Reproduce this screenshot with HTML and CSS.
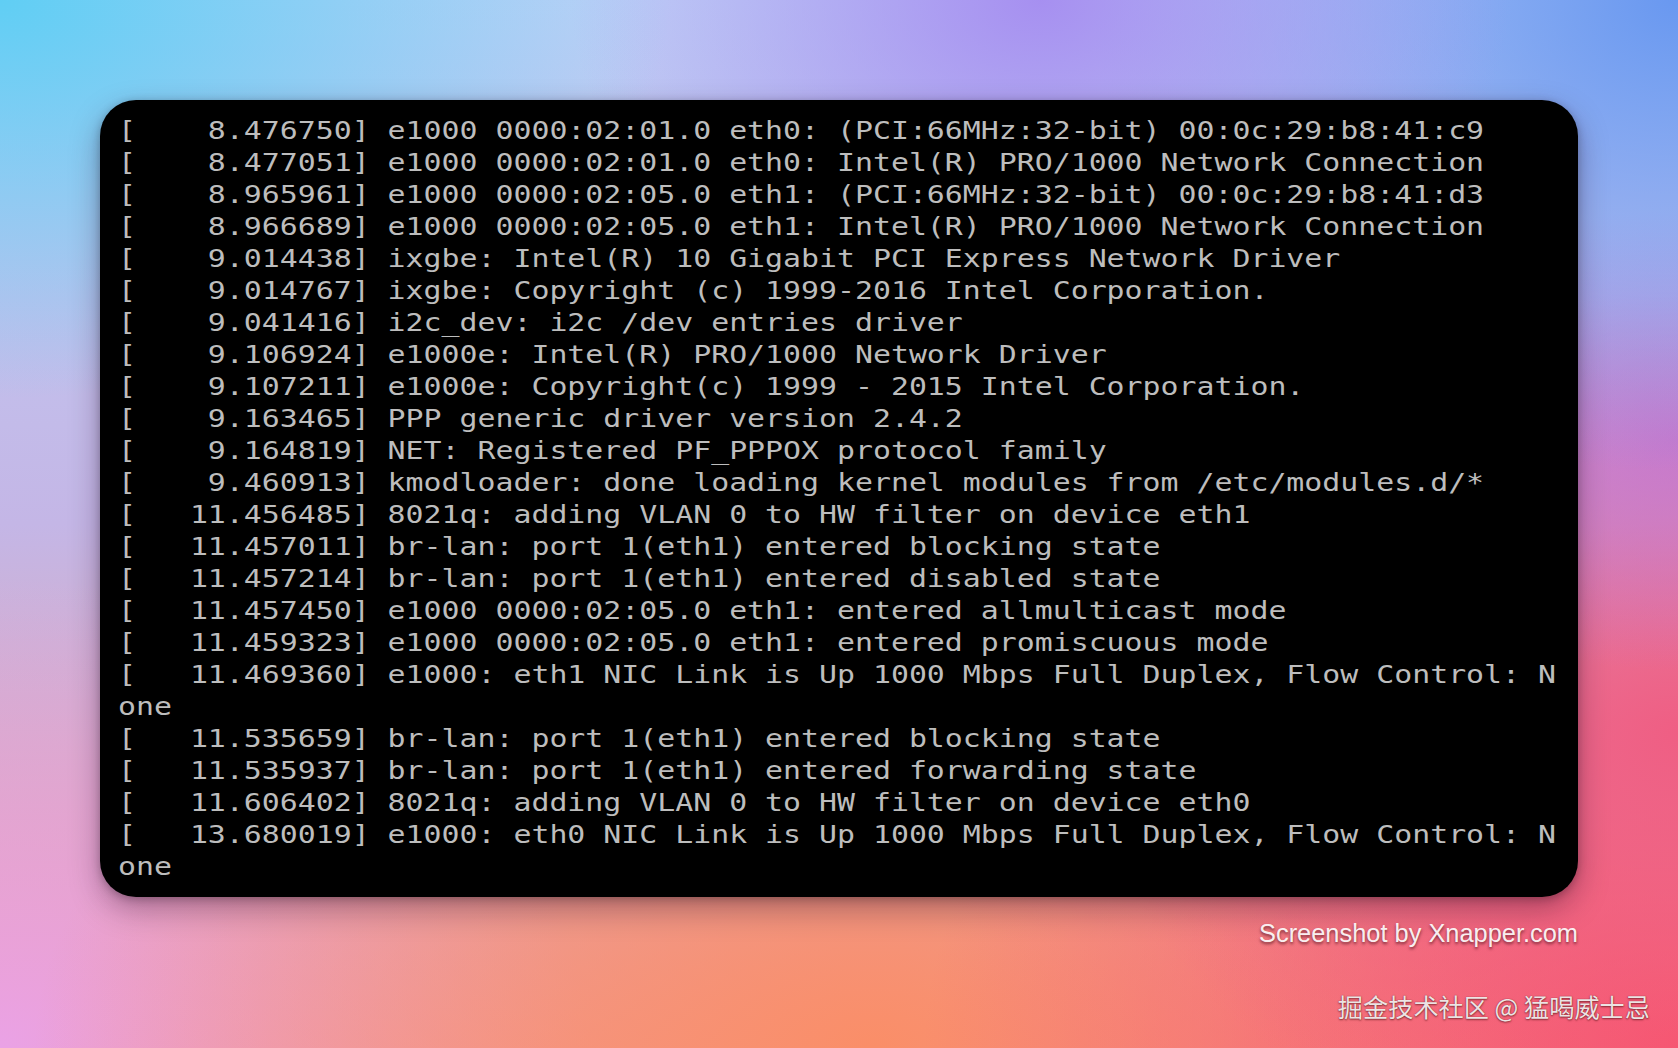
FILE: index.html
```html
<!DOCTYPE html>
<html lang="zh-CN">
<head>
<meta charset="utf-8">
<title>Boot log</title>
<link rel="stylesheet" href="styles.css">
</head>
<body>
<div class="page">
  <div class="stage">
    <div class="terminal">
<pre class="console">[    8.476750] e1000 0000:02:01.0 eth0: (PCI:66MHz:32-bit) 00:0c:29:b8:41:c9
[    8.477051] e1000 0000:02:01.0 eth0: Intel(R) PRO/1000 Network Connection
[    8.965961] e1000 0000:02:05.0 eth1: (PCI:66MHz:32-bit) 00:0c:29:b8:41:d3
[    8.966689] e1000 0000:02:05.0 eth1: Intel(R) PRO/1000 Network Connection
[    9.014438] ixgbe: Intel(R) 10 Gigabit PCI Express Network Driver
[    9.014767] ixgbe: Copyright (c) 1999-2016 Intel Corporation.
[    9.041416] i2c_dev: i2c /dev entries driver
[    9.106924] e1000e: Intel(R) PRO/1000 Network Driver
[    9.107211] e1000e: Copyright(c) 1999 - 2015 Intel Corporation.
[    9.163465] PPP generic driver version 2.4.2
[    9.164819] NET: Registered PF_PPPOX protocol family
[    9.460913] kmodloader: done loading kernel modules from /etc/modules.d/*
[   11.456485] 8021q: adding VLAN 0 to HW filter on device eth1
[   11.457011] br-lan: port 1(eth1) entered blocking state
[   11.457214] br-lan: port 1(eth1) entered disabled state
[   11.457450] e1000 0000:02:05.0 eth1: entered allmulticast mode
[   11.459323] e1000 0000:02:05.0 eth1: entered promiscuous mode
[   11.469360] e1000: eth1 NIC Link is Up 1000 Mbps Full Duplex, Flow Control: N
one
[   11.535659] br-lan: port 1(eth1) entered blocking state
[   11.535937] br-lan: port 1(eth1) entered forwarding state
[   11.606402] 8021q: adding VLAN 0 to HW filter on device eth0
[   13.680019] e1000: eth0 NIC Link is Up 1000 Mbps Full Duplex, Flow Control: N
one</pre>
    </div>
    <div class="credit">Screenshot by Xnapper.com</div>
  </div>
  <div class="watermark">掘金技术社区 @ 猛喝威士忌</div>
</div>
</body>
</html>
```

FILE: styles.css
```css
html, body {
  margin: 0;
  padding: 0;
}

body {
  width: 1678px;
  height: 1048px;
  overflow: hidden;
}

.page {
  position: relative;
  width: 1678px;
  height: 1048px;
  box-sizing: border-box;
  background:
    radial-gradient(ellipse 40% 38% at 0% 0%, rgba(96, 206, 244, 1) 0%, rgba(96, 206, 244, 0) 100%),
    radial-gradient(ellipse 28% 32% at 62% 0%, rgba(165, 140, 240, 0.95) 0%, rgba(165, 140, 240, 0) 100%),
    radial-gradient(ellipse 35% 45% at 100% 0%, rgba(105, 152, 240, 1) 0%, rgba(105, 152, 240, 0) 100%),
    radial-gradient(ellipse 22% 22% at 100% 42%, rgba(196, 112, 206, 0.8) 0%, rgba(196, 112, 206, 0) 100%),
    radial-gradient(ellipse 35% 42% at 100% 70%, rgba(240, 92, 130, 0.95) 0%, rgba(240, 92, 130, 0) 100%),
    radial-gradient(ellipse 45% 50% at 100% 100%, rgba(248, 84, 108, 1) 0%, rgba(248, 84, 108, 0) 100%),
    radial-gradient(ellipse 50% 45% at 52% 100%, rgba(250, 142, 104, 1) 0%, rgba(250, 142, 104, 0) 100%),
    radial-gradient(ellipse 35% 45% at 0% 100%, rgba(234, 162, 230, 1) 0%, rgba(234, 162, 230, 0) 100%),
    linear-gradient(180deg, #bfd0f6 0%, #c4b6e6 50%, #ef9c9a 100%);
  font-family: "Liberation Sans", Arial, sans-serif;
}

.stage {
  display: flex;
  flex-direction: column;
  align-items: flex-end;
  padding: 100px 100px 0 100px;
}

.terminal {
  width: 1478px;
  height: 797px;
  box-sizing: border-box;
  background: #000;
  border-radius: 36px;
  overflow: hidden;
  padding: 15px 0 0 18px;
  box-shadow: 0 12px 30px rgba(40, 10, 40, 0.35), 0 2px 8px rgba(0, 0, 0, 0.25);
}

.console {
  margin: 0;
  font-family: "DejaVu Sans Mono", "Liberation Mono", monospace;
  font-size: 24px;
  line-height: 32px;
  color: #bdbdbd;
  white-space: pre;
  transform: scaleX(1.244);
  transform-origin: 0 0;
}

.credit {
  margin-top: 21px;
  font-size: 25.4px;
  line-height: 30px;
  color: rgba(255, 255, 255, 0.93);
  text-shadow: 0 2px 3px rgba(60, 10, 20, 0.65);
  white-space: nowrap;
}

.watermark {
  position: absolute;
  right: 28px;
  bottom: 26px;
  font-family: "Noto Sans CJK SC", "Liberation Sans", sans-serif;
  font-size: 25.2px;
  line-height: 32px;
  color: rgba(245, 240, 240, 0.95);
  text-shadow: 0 1px 2px rgba(60, 10, 10, 0.6), 0 0 1px rgba(60, 10, 10, 0.5);
  white-space: nowrap;
}
```
